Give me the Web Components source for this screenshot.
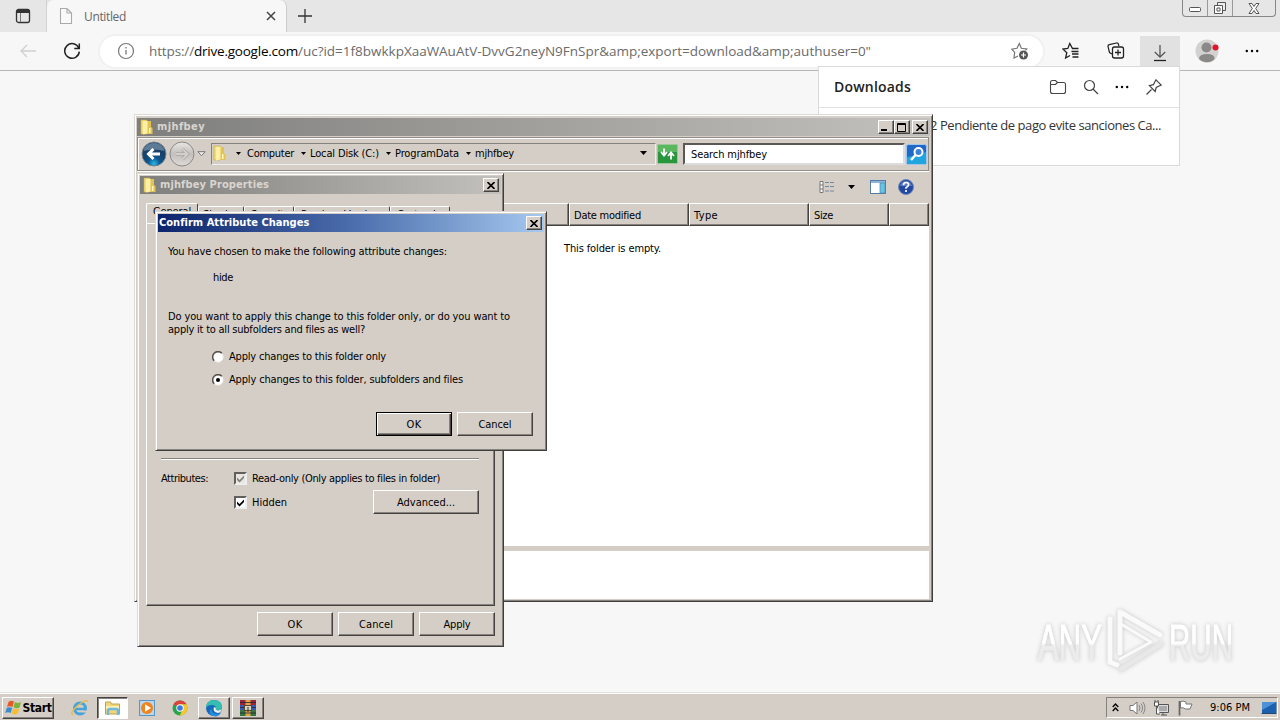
<!DOCTYPE html>
<html lang="en">
<head>
<meta charset="utf-8">
<title>Desktop</title>
<style>
  html, body {
    margin: 0;
    height: 100%;
    overflow: hidden;
  }

  body {
    --face: #d5cec7;
    --shade: #85817c;
    --dark: #45423f;
    width: 1280px;
    height: 720px;
    display: flex;
    flex-direction: column;
    position: relative;
    background: #f7f7f7;
    color: #000;
    font: 11px/13px "DejaVu Sans Condensed", "DejaVu Sans", sans-serif;
  }

  edge-browser { flex: 1; }

  /* free floating windows on the desktop */
  downloads-flyout, classic-window, any-watermark { position: absolute; }
  downloads-flyout { left: 818px; top: 66px; width: 362px; height: 100px; }
  #explorer { left: 134px; top: 114px; width: 799px; height: 488px; --pad-top: 3px; }
  #properties { left: 137px; top: 173px; width: 367px; height: 474px; }
  #confirm { left: 155px; top: 211px; width: 392px; height: 240px; }
  any-watermark { left: 1030px; top: 604px; }
</style>
</head>
<body>
  <edge-browser></edge-browser>
  <downloads-flyout></downloads-flyout>
  <any-watermark></any-watermark>
  <classic-window id="explorer" label="mjhfbey" icon="folder" width="48" buttons="all">
    <explorer-view></explorer-view>
  </classic-window>
  <classic-window id="properties" label="mjhfbey Properties" icon="folder" width="109">
    <properties-page></properties-page>
  </classic-window>
  <classic-window id="confirm" label="Confirm Attribute Changes" width="150" active>
    <confirm-page></confirm-page>
  </classic-window>
  <task-bar></task-bar>

<script>
  const ICONS = {
    tabs: [16, 16, `<rect x="1.5" y="1.5" width="13" height="13" rx="2" fill="none" stroke="#333" stroke-width="1.3"/><path d="M1.5 5V3.5a2 2 0 0 1 2-2h9a2 2 0 0 1 2 2V5z" fill="#333"/><path d="M5.5 5v9" stroke="#777"/>`],
    page: [16, 18, `<path d="M2.5 1.5h6.5l4.5 4.5v10.500h-11zM9 1.500v4.500h4.500" fill="#fafafa" stroke="#aaa" stroke-width="1.100"/>`],
    cross: [10, 10, `<path d="M1 1l8 8M9 1l-8 8" stroke="#444" stroke-width="1.500"/>`],
    plus: [16, 16, `<path d="M8 1v14M1 8h14" stroke="#333" stroke-width="1.300"/>`],
    back: [18, 16, `<path d="M17 8H2M8 2L2 8l6 6" fill="none" stroke="#d0d0d0" stroke-width="1.400"/>`],
    reload: [18, 18, `<path d="M15.800 6.200A7.300 7.300 0 1 0 16.300 9.600" fill="none" stroke="#222" stroke-width="1.500"/><path d="M16.300 1.500v5h-5" fill="none" stroke="#222" stroke-width="1.500"/>`],
    info: [18, 18, `<circle cx="9" cy="9" r="7.500" fill="none" stroke="#777" stroke-width="1.200"/><path d="M9 8v4.500M9 5v1.500" stroke="#777" stroke-width="1.300"/>`],
    starplus: [18, 18, `<path d="M5 15l-2 1 .7-5.600L.8 7.200 6 6.300 8.300 1.500l2 4.800 5.500.6-1.300 1.500M5 15l2-1" fill="none" stroke="#777" stroke-width="1.200"/><circle cx="12.500" cy="13" r="4.500" fill="#555"/><path d="M12.500 10.500v5M10 13h5" stroke="#fff" stroke-width="1.200"/>`],
    starlist: [18, 18, `<path d="M16.500 6.500h-6L7.800 1.500 5.800 6.500.9 7l3.900 3.700-1.200 5.300L8 13.500" fill="none" stroke="#222" stroke-width="1.300"/><path d="M9.500 9.500h7M10 12h6.500M10.500 15h6" stroke="#222" stroke-width="1.300"/>`],
    collections: [18, 18, `<path d="M5 12L2.500 10.500 1 4.500Q.8 3 2.300 2.700L9.500 1Q11 .8 11.500 2.300l.4 1.700" fill="none" stroke="#222" stroke-width="1.200"/><rect x="5.500" y="5" width="11" height="11" rx="2" fill="#f7f7f7" stroke="#222" stroke-width="1.300"/><path d="M11 7.500v6M8 10.500h6" stroke="#222" stroke-width="1.300"/>`],
    download: [16, 18, `<path d="M8 1v12M2.800 8L8 13.200 13.200 8" fill="none" stroke="#555" stroke-width="1.300"/><path d="M2 16.500h12" stroke="#222" stroke-width="1.300"/>`],
    avatar: [24, 24, `<circle cx="12" cy="12" r="11.500" fill="#d4d2d0"/><circle cx="11.500" cy="8.500" r="5" fill="#8b8987"/><path d="M4 20q0-5 8-5t7.500 5q-3 3.300-7.500 3.300T4 20z" fill="#8b8987"/><circle cx="20.500" cy="8.500" r="3" fill="#e0142a"/>`],
    dots: [14, 4, `<circle cx="1.800" cy="2" r="1.200"/><circle cx="7" cy="2" r="1.200"/><circle cx="12.200" cy="2" r="1.200"/>`],
    folderline: [18, 16, `<path d="M1.500 12.500v-9q0-2 2-2h3l2 2h6q2 0 2 2v7q0 2-2 2h-11q-2 0-2-2zM1.500 5.500h5l2-2" fill="none" stroke="#444" stroke-width="1.100"/>`],
    search: [16, 16, `<circle cx="6.500" cy="6.500" r="5" fill="none" stroke="#444" stroke-width="1.200"/><path d="M10 10l5 5" stroke="#444" stroke-width="1.200"/>`],
    pin: [18, 18, `<path d="M11 1.800l5.200 5.200-2 1-3 1.500-1 4-5.800-5.800 4-1 1.500-3zM6.500 11.500L1.500 16.500" fill="none" stroke="#444" stroke-width="1.200"/>`],
    folder: [16, 16, `<path d="M2 1h6v14H2z" fill="#f2dd79" stroke="#c8a943" stroke-width=".6"/><path d="M8 2h4v6l1.500 1v6H8z" fill="#e3c254"/><path d="M4 2h4.500v12.500L4 15.500z" fill="#fbf0a5"/><path d="M10 9h1.500v5H10z" fill="#fff6c0"/>`],
    goback: [26, 26, `<defs><radialGradient id="b" cy=".9"><stop stop-color="#29b8e8"/><stop offset=".5" stop-color="#0c568f"/><stop offset="1" stop-color="#184269"/></radialGradient></defs><circle cx="13" cy="13" r="12" fill="url(#b)" stroke="#76848e"/><path d="M2.500 10q2-8 10.500-8t10.500 8q-10-3-21 0z" fill="#fff" opacity=".3"/><path d="M19 13H8M12.500 8L7.500 13l5 5" fill="none" stroke="#fff" stroke-width="3"/>`],
    goforward: [26, 26, `<defs><linearGradient id="f" x2="0" y2="1"><stop stop-color="#e9e7e4"/><stop offset=".5" stop-color="#c2bfbc"/><stop offset="1" stop-color="#dedbd8"/></linearGradient></defs><circle cx="13" cy="13" r="12" fill="url(#f)" stroke="#8c8a88"/><path d="M7 13h11M13.500 8l5 5-5 5" fill="none" stroke="#aaa7a4" stroke-width="3.500"/><path d="M7 13h11M13.500 8l5 5-5 5" fill="none" stroke="#d2cfcc" stroke-width="2"/>`],
    hollowdown: [9, 6, `<path d="M.8.700h7.400L4.500 4.700z" fill="#eee" stroke="#777"/>`],
    down: [7, 4, `<path d="M0 0h7L3.500 4z"/>`],
    smalldown: [5, 3, `<path d="M0 0h5L2.500 3z"/>`],
    refresh: [21, 20, `<rect x=".5" y=".5" width="20" height="19" rx="1" fill="#28963c" stroke="#9ec69b"/><path d="M1 1h19v7H1z" fill="#59b75e"/><path d="M7 4.500v6M4 8l3 3.500L10 8M14 15.500V9M11 12l3-3.500 3 3.500" fill="none" stroke="#fff" stroke-width="1.800"/>`],
    gosearch: [21, 21, `<rect x=".5" y=".5" width="20" height="20" rx="2" fill="#2167c8" stroke="#a3c7ea"/><path d="M1 13q10-1 19-5v12H1z" fill="#22a5df"/><circle cx="12.500" cy="8" r="4" fill="#3b82d8" stroke="#fff" stroke-width="2"/><path d="M9.500 11L5 16" stroke="#fff" stroke-width="2.500"/>`],
    views: [16, 14, `<path d="M1 1.500h3v11H1zM1 5h3M1 9h3" fill="#fff" stroke="#777"/><path d="M6 2.500h4M11 2.500h4M6 6.500h4M11 6.500h4M6 11h4M11 11h4" stroke="#7688a0"/>`],
    pane: [16, 14, `<rect x=".5" y=".5" width="15" height="13" fill="#fff" stroke="#567da5"/><path d="M1 1h14v2H1z" fill="#8eb5d6"/><path d="M10 3h5v10h-5z" fill="#67c3e3" stroke="#4b87b5" stroke-width=".7"/>`],
    help: [16, 16, `<circle cx="8" cy="8" r="7.500" fill="#2348a4" stroke="#7287b5"/><path d="M2 7q1-5 6-5t6 5z" fill="#7d9be0" opacity=".6"/><path d="M5.500 6.200q0-2.700 2.600-2.700t2.500 2.300Q10.600 7.200 8 8.700v1.100M8 11v2" fill="none" stroke="#fff" stroke-width="1.700"/>`],
    min: [12, 10, `<path d="M1 7h6v2H1z"/>`],
    max: [10, 9, `<path d="M.5.500h8v8h-8zM.5 1.500h8" fill="none" stroke="#000"/>`],
    close: [8, 7, `<path d="M.5 0L7.500 7M7.500 0L.5 7" stroke="#000" stroke-width="1.600"/>`],
    flag: [18, 18, `<path d="M9 2.500Q6 .8 3.600 2.800L2 8Q4.500 6.500 7.500 8z" fill="#e65a28"/><path d="M10 3Q12.500 4.800 16 3L14.500 8.500Q11.500 10 8.500 8.300z" fill="#78b436"/><path d="M1.700 9Q4.500 7.500 7.200 9L5.700 14Q3 12.500.2 14z" fill="#388ccc"/><path d="M8.200 9.500Q11 11 14.200 9.500L12.700 14.500Q9.500 16.500 6.700 14.500z" fill="#f6bd30"/>`],
    ie: [18, 18, `<circle cx="9" cy="9.500" r="5.500" fill="none" stroke="#46a3dc" stroke-width="3"/><path d="M5 10h10" stroke="#46a3dc" stroke-width="2.500"/><path d="M11 11.500h5v2h-5z" fill="#d5cec7"/><path d="M2 16Q-2 14 7 6.500T16.500 3" fill="none" stroke="#e5bd4c" stroke-width="1.500"/>`],
    files: [18, 18, `<path d="M1.500 3h5l1 2h8v10h-14z" fill="#f1d67a" stroke="#c0a04a"/><path d="M2 7h13v3H2z" fill="#fbf0b4"/><path d="M4 16v-4q0-2 2-2h6q2 0 2 2v4" fill="none" stroke="#70b8dd" stroke-width="2.500"/>`],
    media: [16, 16, `<rect x=".5" y=".5" width="15" height="15" fill="#b8d7ee" stroke="#5596c4"/><circle cx="8" cy="8" r="6" fill="#ef841d"/><path d="M6 4.300L12 8l-6 3.700z" fill="#fff"/>`],
    chrome: [16, 16, `<circle cx="8" cy="8" r="7.500" fill="#2ba24c"/><path d="M8 8L1.500 4.300A7.500 7.500 0 0 1 14.500 4.300H8z" fill="#dc4437"/><path d="M8 4.300h6.500A7.500 7.500 0 0 1 7.600 15.500L11 9.500z" fill="#f7c82e"/><circle cx="8" cy="8" r="3.700" fill="#fff"/><circle cx="8" cy="8" r="2.800" fill="#3f78dc"/>`],
    edge: [18, 18, `<circle cx="9" cy="9" r="8" fill="#1767bb"/><path d="M1 9Q1.500 1 9 1q8 0 8 7 0 3.500-4 3.500-3 0-2-2Q11 6 7 6 2.500 6 1 9z" fill="#36bdb2"/><path d="M6.500 9q-.5 6 6.500 6 2 0 3-1-3 4.500-8 3-6-2-1.500-8z" fill="#268ddc"/><path d="M17 10q-2 2-5 1.300-2-.3-1-2.300l-2-1q-2 5 4 6 2.500 0 4-4z" fill="#f0f0ed"/>`],
    rar: [18, 18, `<path d="M1 1h16v5H1z" fill="#9d263c"/><path d="M1 6h16v5H1z" fill="#395ab3"/><path d="M1 11h16v6H1z" fill="#347541"/><path d="M6.500 1h5v16h-5z" fill="#e1a745"/><path d="M1 3.500h16M1 8.500h16M1 14h16" stroke="#252335" stroke-width=".8"/><rect x="5.500" y="6.500" width="7" height="5" fill="#d8d2c0" stroke="#58452c"/><path d="M9 8v5" stroke="#333"/>`],
    chevrons: [7, 9, `<path d="M.7 4l2.800-3 2.800 3M.7 8l2.800-3 2.800 3" fill="none" stroke="#000" stroke-width="1.300"/>`],
    sound: [17, 16, `<path d="M1 5.500h3L8 2v12l-4-3.500H1z" fill="#fff" stroke="#777"/><path d="M10 5q2 3 0 6M12 3.500q3.200 4.500 0 9M14 2q4 6 0 12" fill="none" stroke="#888"/>`],
    network: [17, 16, `<path d="M4.500 4.500h11v8h-11z" fill="#ddd" stroke="#555"/><path d="M6 6h8v5H6z" fill="#aaa"/><path d="M8 15h6M10 13v2" stroke="#555"/><path d="M1.500 2h4v4h-4zM3.500 6v8H7M2 0v2M5 0v2" fill="#fff" stroke="#555"/>`],
    action: [17, 16, `<path d="M2.500 1v14.500" stroke="#666" stroke-width="1.700"/><path d="M3.500 1.500q3-1 5.500.7V4h6l-2 5H8.500Q6 7 3.500 8z" fill="#fff" stroke="#777"/>`],
    desktop: [16, 14, `<path d="M1 1h14.500v11H1z" fill="#1c5fae"/><path d="M1 1h14.500L1 9z" fill="#4d92d6"/><path d="M.5 12.500h15" stroke="#234772"/>`],
    tick: [9, 9, `<path d="M1 3.500L3.500 6 8 1.500V4L3.500 8.500 1 6z" fill="currentColor"/>`]
  };

  class AppIcon extends HTMLElement {
    connectedCallback() {
      if (this.shadowRoot) return;
      const [w, h, body] = ICONS[this.getAttribute('name')];
      const width = this.getAttribute('size') || w;
      this.attachShadow({ mode: 'open' }).innerHTML = `
        <style>:host { display: inline-flex; flex: none; } svg { display: block; }</style>
        <svg width="${width}" height="${width * h / w}" viewBox="0 0 ${w} ${h}">${body}</svg>`;
    }
  }

  // One line label with tracking adjusted to a given width
  class FitText extends HTMLElement {
    connectedCallback() {
      if (this.shadowRoot) return;
      this.attachShadow({ mode: 'open' }).innerHTML =
        '<style>:host { display: inline-block; white-space: nowrap; flex: none; }</style><slot></slot>';
      const target = Number(this.getAttribute('w'));
      if (!target) return;
      const natural = this.getBoundingClientRect().width;
      this.style.letterSpacing = `${(target - natural) / this.textContent.length}px`;
      this.style.width = `${target}px`;
    }
  }

  class ViewElement extends HTMLElement {
    connectedCallback() {
      if (this.shadowRoot) return;
      this.attachShadow({ mode: 'open' }).innerHTML = this.view();
    }
  }

  class EdgeBrowser extends ViewElement {
    view() {
      return `
        <style>
          :host { display: flex; flex-direction: column; font-family: "Open Sans", "Noto Sans", sans-serif; }
          .tabs { height: 32px; display: flex; background: #e6e6e6; }
          .menu { width: 47px; display: flex; align-items: center; justify-content: center; box-sizing: border-box; border-right: 1px solid #d2d2d2; }
          .tab { width: 240px; box-sizing: border-box; padding: 0 10px 0 11px; display: flex; align-items: center; background: #f7f7f7; border-radius: 7px 7px 0 0; font-size: 12px; color: #666; border-right: 1px solid #ccc; }
          .tab fit-text { margin: 0 auto 0 10px; }
          .new { margin: 8px auto 0 10px; }
          .caption { display: flex; height: 17px; margin-right: 4px; border: 1px solid #888; border-top: 0; border-radius: 0 0 4px 4px; box-sizing: border-box; }
          .caption span { display: flex; justify-content: center; align-items: center; width: 24px; border-right: 1px solid #999; }
          .caption span:last-child { width: 42px; border: 0; }
          .bar { height: 38px; display: flex; align-items: center; background: #f7f7f7; border-bottom: 1px solid #b6b6b6; }
          .bar > :nth-child(1) { margin-left: 19px; }
          .bar > :nth-child(2) { margin-left: 26px; }
          .url { margin-left: 19px; width: 943px; height: 31px; border-radius: 16px; background: #fff; box-shadow: 0 0 0 2px #f1f1f1; display: flex; align-items: center; box-sizing: border-box; padding: 0 14px 0 17px; font-size: 13.500px; line-height: 20px; color: #6b6b6b; }
          .url app-icon:first-child { margin-right: 14px; }
          .url app-icon:last-child { margin-left: auto; }
          .url b { font-weight: 400; color: #000; }
          .tools { display: flex; align-items: center; }
          .active { width: 40px; height: 34px; margin: 4px 0 0 15px; display: flex; align-items: center; justify-content: center; background: #e1e1e1; }
        </style>
        <div class="tabs">
          <div class="menu"><app-icon name="tabs"></app-icon></div>
          <div class="tab"><app-icon name="page"></app-icon><fit-text w="42">Untitled</fit-text><app-icon name="cross"></app-icon></div>
          <app-icon class="new" name="plus"></app-icon>
          <div class="caption">
            <span><svg width="14" height="10"><rect x="1.500" y="4.500" width="11" height="4" rx="1" fill="#fff" stroke="#555"/></svg></span>
            <span><svg width="14" height="14"><path d="M4.500 1.500h8v8h-8z" fill="#eee" stroke="#555"/><path d="M1.500 4.500h8v8h-8zM4 7h3v3H4z" fill="#fff" stroke="#555"/></svg></span>
            <span><svg width="12" height="11"><path d="M1 .500h3L6 3.500 8 .500h3L7.700 5.500 11 10.500H8L6 7.500 4 10.500H1L4.300 5.500z" fill="#fff" stroke="#555"/></svg></span>
          </div>
        </div>
        <div class="bar">
          <app-icon name="back"></app-icon>
          <app-icon name="reload"></app-icon>
          <div class="url">
            <app-icon name="info"></app-icon>
            <fit-text w="45">https://</fit-text><b><fit-text w="104">drive.google.com</fit-text></b><fit-text w="573">/uc?id=1f8bwkkpXaaWAuAtV-DvvG2neyN9FnSpr&amp;amp;export=download&amp;amp;authuser=0"</fit-text>
            <app-icon name="starplus"></app-icon>
          </div>
          <div class="tools">
            <app-icon name="starlist" style="margin-left:19px"></app-icon>
            <app-icon name="collections" style="margin-left:27px"></app-icon>
            <div class="active"><app-icon name="download"></app-icon></div>
            <app-icon name="avatar" style="margin-left:15px"></app-icon>
            <app-icon name="dots" style="margin-left:26px"></app-icon>
          </div>
        </div>`;
    }
  }

  class DownloadsFlyout extends ViewElement {
    view() {
      return `
        <style>
          :host { display: block; box-sizing: border-box; background: #fff; border: 1px solid #dadada; color: #333; font-family: "Open Sans", "Noto Sans", sans-serif; }
          header { height: 40px; display: flex; align-items: center; padding: 0 16px 0 15px; gap: 16px; border-bottom: 1px solid #e2e2e2; font: 600 14px/20px "Open Sans", sans-serif; color: #222; }
          header fit-text { margin-right: auto; }
          .file { display: flex; justify-content: flex-end; padding: 8px 18px; font-size: 13px; line-height: 18px; }
        </style>
        <header><fit-text w="77">Downloads</fit-text><app-icon name="folderline"></app-icon><app-icon name="search"></app-icon><app-icon name="dots"></app-icon><app-icon name="pin"></app-icon></header>
        <div class="file"><fit-text w="231">2 Pendiente de pago evite sanciones Ca...</fit-text></div>`;
    }
  }

  class ClassicButton extends ViewElement {
    view() {
      return `
        <style>
          :host { display: flex; align-items: center; justify-content: center; box-sizing: border-box; background: var(--face); border: 1px solid; border-color: #fff var(--dark) var(--dark) #fff; box-shadow: inset -1px -1px var(--shade); }
          :host([default]) { border-color: #000; box-shadow: inset 1px 1px #fff, inset -1px -1px var(--dark), inset -2px -2px var(--shade); }
        </style>
        <slot></slot>`;
    }
  }

  class ClassicWindow extends ViewElement {
    view() {
      const icon = this.getAttribute('icon');
      const all = this.getAttribute('buttons') === 'all';
      return `
        <style>
          :host { display: flex; flex-direction: column; box-sizing: border-box; padding: var(--pad-top, 2px) 2px 2px; background: var(--face); border: 1px solid; border-color: #dedad5 #403d3d #403d3d #dedad5; box-shadow: inset 1px 1px #fff, inset -1px -1px var(--shade); }
          .title { height: 18px; flex: none; display: flex; align-items: center; padding: 0 2px; background: linear-gradient(90deg, #7e7e7c, #c3c1bd); color: #d9d5cf; font-weight: 700; }
          :host([active]) .title { background: linear-gradient(90deg, #0c246c, #4e70ae 52%, #a5c9ef); color: #fff; padding-left: 1px; }
          .title > app-icon { margin-right: 2px; }
          .title fit-text { margin-right: auto; line-height: 16px; }
          classic-button { width: 16px; height: 14px; flex: none; }
          .last { margin-left: 2px; }
          slot { display: flex; flex: 1; min-height: 0; }
        </style>
        <div class="title">
          ${icon ? `<app-icon name="${icon}"></app-icon>` : ''}
          <fit-text w="${this.getAttribute('width')}">${this.getAttribute('label')}</fit-text>
          ${all ? `<classic-button><app-icon name="min"></app-icon></classic-button><classic-button><app-icon name="max"></app-icon></classic-button>` : ''}
          <classic-button class="last"><app-icon name="close"></app-icon></classic-button>
        </div>
        <slot></slot>`;
    }
  }

  class ExplorerView extends ViewElement {
    view() {
      return `
        <style>
          :host { flex: 1; display: flex; flex-direction: column; min-width: 0; margin-right: 1px; }
          .nav { margin-top: 1px; height: 34px; box-sizing: border-box; border: 1px solid #918d88; box-shadow: inset 1px 1px #fff, 0 1px #fff; display: flex; align-items: center; padding: 0 1px 0 3px; }
          .nav > app-icon:nth-child(2) { margin-left: 2px; }
          .nav > app-icon:nth-child(3) { margin: 0 5px 0 2px; }
          .address { width: 445px; height: 22px; box-sizing: border-box; border: 1px solid; border-color: #85817c #eee #eee #85817c; display: flex; align-items: center; padding: 0 8px 2px 0; }
          .address > app-icon { margin-left: 7px; margin-right: 4px; }
          .address > app-icon:nth-child(2) { margin-left: 8px; margin-right: 6px; }
          .address > app-icon:first-child { margin: 0; }
          .address > app-icon:last-child { margin: 0 0 0 auto; }
          .search { margin: 0 1px 0 5px; width: 222px; height: 22px; box-sizing: border-box; background: #fff; border: 2px solid; border-color: #5c5854 #ddd #ddd #5c5854; display: flex; align-items: center; padding-left: 6px; }
          .tools { height: 32px; display: flex; align-items: center; justify-content: flex-end; padding-right: 15px; }
          .tools > :nth-child(2) { margin: 0 15px 0 13px; }
          .tools > :nth-child(4) { margin-left: 12px; }
          .columns { height: 23px; display: flex; }
          .columns div { box-sizing: border-box; width: 120px; padding: 5px 0 0 4px; border: 1px solid; border-color: #fff var(--dark) var(--dark) #fff; box-shadow: inset -1px -1px var(--shade); }
          .columns .name { width: 432px; }
          .columns .size { width: 80px; }
          .columns .rest { flex: 1; }
          .list { flex: 1; background: #fff; padding: 16px 0 0 427px; }
          .details { height: 48px; background: #fff; border-top: 5px solid var(--face); }
        </style>
        <div class="nav">
          <app-icon name="goback"></app-icon><app-icon name="goforward"></app-icon><app-icon name="hollowdown"></app-icon>
          <div class="address">
            <app-icon name="folder"></app-icon>
            <app-icon name="smalldown"></app-icon><fit-text w="47">Computer</fit-text>
            <app-icon name="smalldown"></app-icon><fit-text w="69">Local Disk (C:)</fit-text>
            <app-icon name="smalldown"></app-icon><fit-text w="64">ProgramData</fit-text>
            <app-icon name="smalldown"></app-icon><fit-text w="39">mjhfbey</fit-text>
            <app-icon name="down"></app-icon>
          </div>
          <app-icon name="refresh" style="margin-left:1px"></app-icon>
          <div class="search"><fit-text w="76">Search mjhfbey</fit-text></div>
          <app-icon name="gosearch"></app-icon>
        </div>
        <div class="tools"><app-icon name="views"></app-icon><app-icon name="down"></app-icon><app-icon name="pane"></app-icon><app-icon name="help"></app-icon></div>
        <div class="columns">
          <div class="name"></div>
          <div><fit-text w="67">Date modified</fit-text></div>
          <div><fit-text w="24">Type</fit-text></div>
          <div class="size"><fit-text w="19">Size</fit-text></div>
          <div class="rest"></div>
        </div>
        <div class="list"><fit-text w="97">This folder is empty.</fit-text></div>
        <div class="details"></div>`;
    }
  }

  class ClassicCheck extends ViewElement {
    view() {
      const on = this.hasAttribute('checked');
      const type = this.getAttribute('type');
      return `
        <style>
          :host { display: flex; align-items: center; gap: 5px; }
          .box { width: 13px; height: 13px; box-sizing: border-box; border: 2px solid; border-color: #625f5b #eee #eee #625f5b; background: #fff; display: flex; align-items: center; justify-content: center; }
          :host([mixed]) .box { background: #e9e5e1; color: #85817c; }
          svg { display: block; }
        </style>
        ${type === 'radio'
          ? `<svg width="12" height="12"><circle cx="6" cy="6" r="5" fill="#fff" stroke="#f8f6f3"/><path d="M2.200 9.800A5.200 5.200 0 0 1 9.800 2.200" fill="none" stroke="#55514d" stroke-width="1.500"/>${on ? '<circle cx="6" cy="6" r="2"/>' : ''}</svg>`
          : `<div class="box">${on ? '<app-icon name="tick"></app-icon>' : ''}</div>`}
        <slot></slot>`;
    }
  }

  class PropertiesPage extends ViewElement {
    view() {
      return `
        <style>
          :host { flex: 1; display: flex; flex-direction: column; padding: 9px 6px 8px; }
          .tabs { display: flex; align-items: flex-end; height: 20px; flex: none; }
          .tabs div { box-sizing: border-box; height: 17px; padding: 1px 0 0 6px; border: 1px solid; border-color: #fff var(--dark) transparent #fff; border-bottom: 0; border-radius: 2px 2px 0 0; }
          .tabs .on { height: 20px; }
          .sheet { height: 385px; box-sizing: border-box; border: 1px solid; border-color: #fff var(--dark) var(--dark) #fff; box-shadow: inset -1px -1px var(--shade); padding: 234px 15px 0 14px; }
          hr { margin: 0; border: 0; border-top: 1px solid var(--shade); border-bottom: 1px solid #fff; }
          .row { display: flex; }
          .label { width: 73px; }
          .row classic-button { margin-left: auto; width: 106px; height: 24px; }
          .foot { display: flex; justify-content: flex-end; gap: 5px; margin-top: 6px; }
          .foot classic-button { width: 76px; height: 24px; }
        </style>
        <div class="tabs">
          <div class="on" style="width:52px"><fit-text w="38">General</fit-text></div>
          <div style="width:46px;padding-left:4px"><fit-text w="37">Sharing</fit-text></div>
          <div style="width:50px"><fit-text w="38">Security</fit-text></div>
          <div style="width:96px"><fit-text w="83">Previous Versions</fit-text></div>
          <div style="width:60px"><fit-text w="49">Customize</fit-text></div>
        </div>
        <div class="sheet">
          <hr>
          <div class="row" style="margin-top:12px"><div class="label"><fit-text w="47">Attributes:</fit-text></div><classic-check checked mixed><fit-text w="188">Read-only (Only applies to files in folder)</fit-text></classic-check></div>
          <div class="row" style="margin-top:5px"><div class="label"></div><classic-check checked><fit-text w="35">Hidden</fit-text></classic-check><classic-button><fit-text w="58">Advanced...</fit-text></classic-button></div>
        </div>
        <div class="foot">
          <classic-button><fit-text w="15">OK</fit-text></classic-button>
          <classic-button><fit-text w="34">Cancel</fit-text></classic-button>
          <classic-button><fit-text w="27">Apply</fit-text></classic-button>
        </div>`;
    }
  }

  class ConfirmPage extends ViewElement {
    view() {
      return `
        <style>
          :host { flex: 1; display: flex; flex-direction: column; align-items: flex-start; padding: 13px 11px 12px 10px; }
          .indent { margin-left: 45px; }
          .buttons { display: flex; gap: 5px; margin-top: auto; align-self: flex-end; }
          .buttons classic-button { width: 76px; height: 24px; }
        </style>
        <fit-text w="279">You have chosen to make the following attribute changes:</fit-text>
        <fit-text class="indent" w="20" style="margin-top:13px">hide</fit-text>
        <fit-text w="342" style="margin-top:26px">Do you want to apply this change to this folder only, or do you want to</fit-text>
        <fit-text w="197">apply it to all subfolders and files as well?</fit-text>
        <classic-check class="indent" type="radio" style="margin-top:14px;margin-left:44px"><fit-text w="157">Apply changes to this folder only</fit-text></classic-check>
        <classic-check class="indent" type="radio" checked style="margin-top:10px;margin-left:44px"><fit-text w="234">Apply changes to this folder, subfolders and files</fit-text></classic-check>
        <div class="buttons">
          <classic-button default><fit-text w="15">OK</fit-text></classic-button>
          <classic-button><fit-text w="33">Cancel</fit-text></classic-button>
        </div>`;
    }
  }

  class TaskBar extends ViewElement {
    view() {
      return `
        <style>
          :host { display: flex; align-items: center; height: 28px; box-sizing: border-box; padding: 2px 2px 0; background: var(--face); border-top: 1px solid #e4e0dc; box-shadow: inset 0 1px #fff; }
          classic-button { width: 32px; height: 22px; }
          .start { width: 52px; gap: 0; font: 700 12px/14px "DejaVu Sans Condensed", sans-serif; }
          .pressed { width: 31px; background: #fff; border-color: var(--dark) #fff #fff var(--dark); box-shadow: inset 1px 1px var(--shade); }
          .tray { margin-left: auto; width: 172px; height: 21px; box-sizing: border-box; border: 1px solid; border-color: #85817c #fff #fff #85817c; display: flex; align-items: center; padding: 0 0 0 5px; }
        </style>
        <classic-button class="start"><app-icon name="flag"></app-icon><fit-text w="29">Start</fit-text></classic-button>
        <app-icon name="ie" style="margin-left:17px"></app-icon>
        <classic-button class="pressed" style="margin-left:8px"><app-icon name="files"></app-icon></classic-button>
        <app-icon name="media" style="margin-left:11px"></app-icon>
        <app-icon name="chrome" style="margin-left:17px"></app-icon>
        <classic-button style="margin-left:10px"><app-icon name="edge"></app-icon></classic-button>
        <classic-button style="margin-left:2px"><app-icon name="rar"></app-icon></classic-button>
        <div class="tray">
          <app-icon name="chevrons"></app-icon>
          <app-icon name="sound" style="margin-left:10px"></app-icon>
          <app-icon name="network" style="margin-left:7px"></app-icon>
          <app-icon name="action" style="margin-left:7px"></app-icon>
          <fit-text w="40" style="margin-left:16px">9:06 PM</fit-text>
          <app-icon name="desktop" style="margin-left:11px"></app-icon>
        </div>`;
    }
  }

  class AnyWatermark extends ViewElement {
    view() {
      return `
        <style>
          :host { display: block; }
          svg { display: block; overflow: visible; filter: drop-shadow(0 0 2px #c4c4c4); }
          text { font: 400 50px "Liberation Sans", sans-serif; fill: url(#w); stroke: url(#w); }
        </style>
        <svg width="240" height="76">
          <defs><linearGradient id="w" x2="0" y2="1"><stop offset=".5" stop-color="#fff"/><stop offset=".55" stop-color="#ececec"/></linearGradient></defs>
          <text x="8" y="56" textLength="64" lengthAdjust="spacingAndGlyphs">ANY</text>
          <text x="139" y="56" textLength="64" lengthAdjust="spacingAndGlyphs">RUN</text>
          <g fill="none" stroke="#fafafa" stroke-width="5" stroke-linecap="round" stroke-linejoin="round">
            <path d="M80 15v43l7 3M90 49V8l40 23"/>
            <path d="M91 20l30 18-31 17" stroke-width="3"/>
            <path d="M91 65l40-25" stroke="#e8e8e8"/>
          </g>
        </svg>`;
    }
  }

  customElements.define('app-icon', AppIcon);
  customElements.define('classic-button', ClassicButton);
  customElements.define('classic-check', ClassicCheck);
  customElements.define('classic-window', ClassicWindow);
  customElements.define('edge-browser', EdgeBrowser);
  customElements.define('downloads-flyout', DownloadsFlyout);
  customElements.define('explorer-view', ExplorerView);
  customElements.define('properties-page', PropertiesPage);
  customElements.define('confirm-page', ConfirmPage);
  customElements.define('any-watermark', AnyWatermark);
  customElements.define('task-bar', TaskBar);
  // last, so labels are measured in their final font
  customElements.define('fit-text', FitText);
</script>
</body>
</html>
